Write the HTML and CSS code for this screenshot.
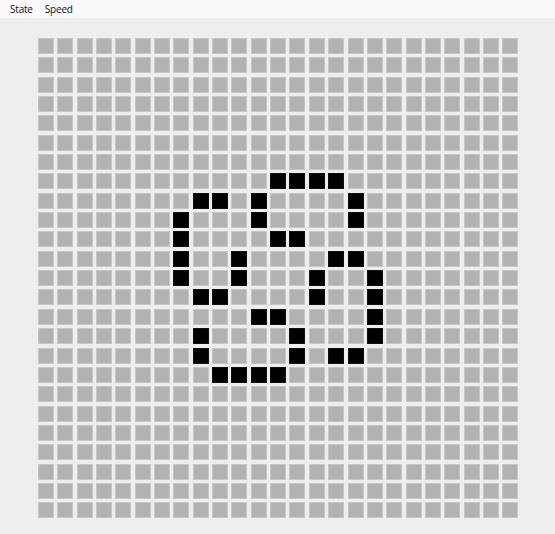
FILE: index.html
```html
<!DOCTYPE html>
<html lang="en">
<head>
    <meta charset="UTF-8">
    <title>Game of Life</title>
    <link rel="stylesheet" href="styles.css">
</head>
<body>
    <div class="menubar">
        <span class="menu-item">State</span>
        <span class="menu-item">Speed</span>
    </div>
    <div class="board" id="board"></div>

    <script>
        const size = 25;
        const alive = {
            7: [12, 13, 14, 15],
            8: [8, 9, 11, 16],
            9: [7, 11, 16],
            10: [7, 12, 13],
            11: [7, 10, 15, 16],
            12: [7, 10, 14, 17],
            13: [8, 9, 14, 17],
            14: [11, 12, 17],
            15: [8, 13, 17],
            16: [8, 13, 15, 16],
            17: [9, 10, 11, 12]
        };
        const board = document.getElementById("board");

        for (let r = 0; r < size; r++) {
            for (let c = 0; c < size; c++) {
                const cell = document.createElement("div");
                cell.className = "cell";
                if (alive[r] && alive[r].includes(c)) {
                    cell.classList.add("alive");
                }
                board.appendChild(cell);
            }
        }
    </script>
</body>
</html>
```
FILE: styles.css
```css
body { margin: 0; background: #efedf0; font-family: "Open Sans", "Noto Sans", sans-serif; }
.menubar { height: 18px; background: #fbf9fb; display: flex; align-items: center; padding-left: 10px; gap: 12px; font-size: 10px; letter-spacing: -0.2px; color: #111; }
.board { display: grid; grid-template-columns: repeat(25, 16px); grid-auto-rows: 16px; gap: 3.35px; margin: 20px 0 0 38px; width: max-content; }
.cell { box-sizing: border-box; background: #b2b1b4; border: 1px solid #c6c5c8; }
.cell.alive { background: #000; border-color: #111; }
```
